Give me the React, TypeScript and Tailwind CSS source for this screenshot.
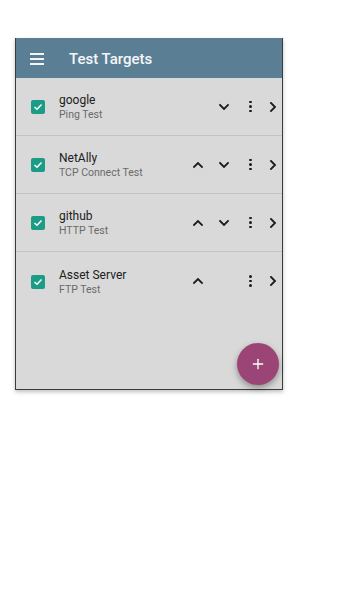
import { Plus } from "lucide-react";

type Target = {
  name: string;
  test: string;
  up: boolean;
  down: boolean;
};

const targets: Target[] = [
  { name: "google", test: "Ping Test", up: false, down: true },
  { name: "NetAlly", test: "TCP Connect Test", up: true, down: true },
  { name: "github", test: "HTTP Test", up: true, down: true },
  { name: "Asset Server", test: "FTP Test", up: true, down: false },
];

function Chevron({ dir }: { dir: "up" | "down" | "right" }) {
  const points =
    dir === "up" ? "1,6 5,2 9,6" : dir === "down" ? "1,2 5,6 9,2" : "2,1 6,5 2,9";
  const size = dir === "right" ? { w: 8, h: 10 } : { w: 10, h: 8 };
  return (
    <svg width={size.w} height={size.h} viewBox={`0 0 ${size.w} ${size.h}`} fill="none">
      <polyline points={points} stroke="#1a1a1a" strokeWidth="1.8" strokeLinecap="square" />
    </svg>
  );
}

function Dots() {
  return (
    <div className="flex flex-col items-center gap-[2px]">
      <span className="w-[2.5px] h-[2.5px] rounded-full bg-[#1a1a1a]" />
      <span className="w-[2.5px] h-[2.5px] rounded-full bg-[#1a1a1a]" />
      <span className="w-[2.5px] h-[2.5px] rounded-full bg-[#1a1a1a]" />
    </div>
  );
}

function CheckBox() {
  return (
    <div className="w-[14px] h-[14px] rounded-[2px] bg-[#1c9c86] flex items-center justify-center">
      <svg width="10" height="8" viewBox="0 0 10 8" fill="none">
        <polyline points="1.5,4 4,6.3 8.5,1.5" stroke="#ffffff" strokeWidth="1.5" />
      </svg>
    </div>
  );
}

export default function App() {
  return (
    <div className="w-[360px] h-[612px] bg-white pt-[38px] pl-[15px] font-['Roboto',sans-serif]">
      <div className="w-[268px] h-[352px] flex flex-col border-x border-b border-[#3c3c3c] shadow-[0_2px_4px_rgba(0,0,0,0.25)]">
        {/* Toolbar */}
        <div className="h-[40px] bg-[#5a7e94] flex items-center">
          <div className="w-[14px] ml-[14px] mt-[2px] flex flex-col gap-[3px]">
            <span className="h-[2px] bg-[#f2f5f7]" />
            <span className="h-[2px] bg-[#f2f5f7]" />
            <span className="h-[2px] bg-[#f2f5f7]" />
          </div>
          <h1 className="ml-[25px] mt-[3px] text-[15px] font-medium text-[#f4f7f9]">Test Targets</h1>
        </div>

        {/* List */}
        <div className="flex-1 bg-[#d9d9d9] relative">
          {targets.map((t, i) => (
            <div
              key={t.name}
              className={`h-[58px] flex items-center ${i < 3 ? "border-b border-[#c4c4c4]" : ""}`}
            >
              <div className="pl-[15px] pr-[14px] pt-[1px]">
                <CheckBox />
              </div>
              <div className="flex-1 min-w-0 pt-[2px]">
                <div className="text-[12px] leading-[12px] text-[#202020]">{t.name}</div>
                <div className="text-[10.5px] leading-[12px] text-[#6a6a6a] mt-[3px]">{t.test}</div>
              </div>
              <div className="w-[27px] flex justify-center">{t.up && <Chevron dir="up" />}</div>
              <div className="w-[26px] flex justify-center">{t.down && <Chevron dir="down" />}</div>
              <div className="w-[27px] flex justify-center">
                <Dots />
              </div>
              <div className="w-[18px] flex justify-center">
                <Chevron dir="right" />
              </div>
            </div>
          ))}

          <button className="absolute right-[3px] bottom-[4px] w-[42px] h-[42px] rounded-full bg-[#9b4476] flex items-center justify-center shadow-[0_3px_6px_rgba(0,0,0,0.35)]">
            <Plus size={16} color="#ffffff" strokeWidth={2} />
          </button>
        </div>
      </div>
    </div>
  );
}
